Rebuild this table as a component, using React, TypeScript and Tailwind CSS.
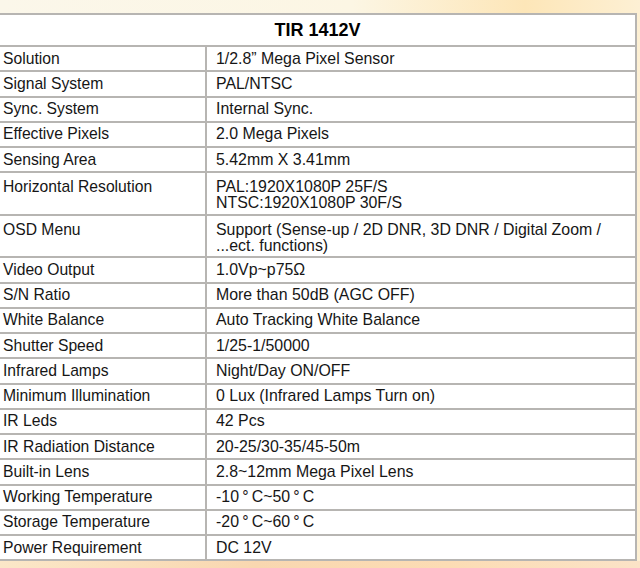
const rows: { label: string; value: string[] }[] = [
  { label: 'Solution', value: ['1/2.8” Mega Pixel Sensor'] },
  { label: 'Signal System', value: ['PAL/NTSC'] },
  { label: 'Sync. System', value: ['Internal Sync.'] },
  { label: 'Effective Pixels', value: ['2.0 Mega Pixels'] },
  { label: 'Sensing Area', value: ['5.42mm X 3.41mm'] },
  { label: 'Horizontal Resolution', value: ['PAL:1920X1080P 25F/S', 'NTSC:1920X1080P 30F/S'] },
  { label: 'OSD Menu', value: ['Support (Sense-up / 2D DNR, 3D DNR / Digital Zoom /', '...ect. functions)'] },
  { label: 'Video Output', value: ['1.0Vp~p75Ω'] },
  { label: 'S/N Ratio', value: ['More than 50dB (AGC OFF)'] },
  { label: 'White Balance', value: ['Auto Tracking White Balance'] },
  { label: 'Shutter Speed', value: ['1/25-1/50000'] },
  { label: 'Infrared Lamps', value: ['Night/Day ON/OFF'] },
  { label: 'Minimum Illumination', value: ['0 Lux (Infrared Lamps Turn on)'] },
  { label: 'IR Leds', value: ['42 Pcs'] },
  { label: 'IR Radiation Distance', value: ['20-25/30-35/45-50m'] },
  { label: 'Built-in Lens', value: ['2.8~12mm Mega Pixel Lens'] },
  { label: 'Working Temperature', value: ['-10\u2009°\u2009C~50\u2009°\u2009C'] },
  { label: 'Storage Temperature', value: ['-20\u2009°\u2009C~60\u2009°\u2009C'] },
  { label: 'Power Requirement', value: ['DC 12V'] },
]

export default function App() {
  return (
    <div className="w-[640px] h-[568px] overflow-hidden bg-[linear-gradient(90deg,#fbf7ea_0%,#fcf6e4_55%,#fde6b8_82%,#fdf0d4_100%)] pt-[13px] font-['Liberation_Sans',Arial,sans-serif] text-[#161616]">
      <div className="w-[637px] bg-white border-t-2 border-r-2 border-[#b7b5b2]">
        <div className="h-[32px] flex items-center justify-center border-b-2 border-[#b7b5b2] text-[18px] font-bold text-black">
          TIR 1412V
        </div>
        {rows.map((row) => {
          const tall = row.value.length > 1
          return (
            <div
              key={row.label}
              className={`grid grid-cols-[207px_1fr] border-b-2 border-[#b7b5b2] ${tall ? 'h-[42.5px]' : 'h-[25.25px]'}`}
            >
              <div className={`border-r-2 border-[#b7b5b2] pl-[3px] text-[15.7px] leading-[16px] flex ${tall ? 'pt-[6px] items-start' : 'items-center'}`}>
                {row.label}
              </div>
              <div className={`pl-[9px] text-[15.9px] leading-[16px] flex flex-col ${tall ? 'pt-[6px]' : 'justify-center'}`}>
                {row.value.map((v) => (
                  <span key={v}>{v}</span>
                ))}
              </div>
            </div>
          )
        })}
      </div>
      <div className="h-[10px] bg-[linear-gradient(90deg,#fbe7c8_0%,#f9d7b0_40%,#fcdcb4_70%,#fbe3c7_100%)]" />
    </div>
  )
}
